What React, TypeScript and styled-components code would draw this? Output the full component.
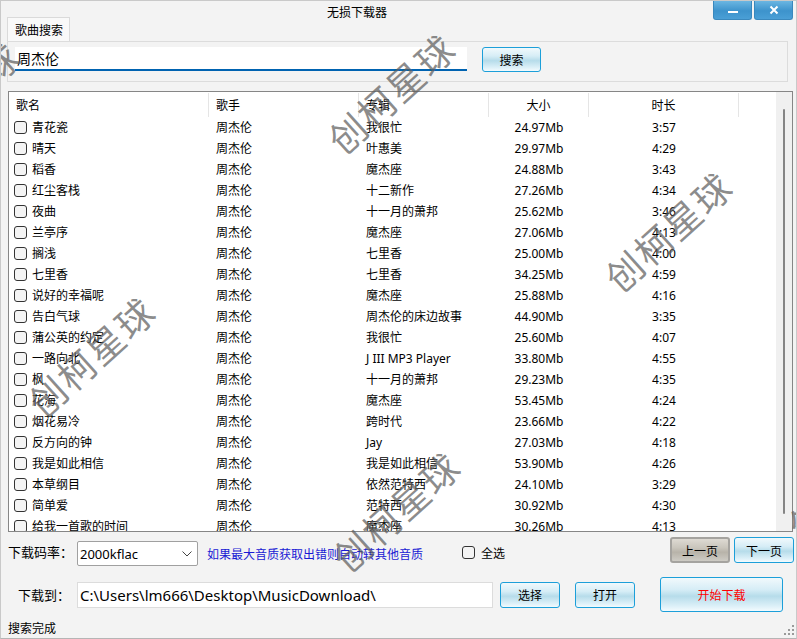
import React from 'react'
import styled, { createGlobalStyle, css } from 'styled-components'

const GlobalStyle = createGlobalStyle`
  html, body {
    margin: 0;
    padding: 0;
    background: #f3f3f3;
  }
  body {
    font-family: "Noto Sans", "Noto Sans CJK SC", sans-serif;
    font-size: 12px;
    color: #000;
  }
`

type Song = [string, string, string, string]

const songs: Song[] = [
  ['青花瓷', '我很忙', '24.97Mb', '3:57'],
  ['晴天', '叶惠美', '29.97Mb', '4:29'],
  ['稻香', '魔杰座', '24.88Mb', '3:43'],
  ['红尘客栈', '十二新作', '27.26Mb', '4:34'],
  ['夜曲', '十一月的萧邦', '25.62Mb', '3:46'],
  ['兰亭序', '魔杰座', '27.06Mb', '4:13'],
  ['搁浅', '七里香', '25.00Mb', '4:00'],
  ['七里香', '七里香', '34.25Mb', '4:59'],
  ['说好的幸福呢', '魔杰座', '25.88Mb', '4:16'],
  ['告白气球', '周杰伦的床边故事', '44.90Mb', '3:35'],
  ['蒲公英的约定', '我很忙', '25.60Mb', '4:07'],
  ['一路向北', 'J III MP3 Player', '33.80Mb', '4:55'],
  ['枫', '十一月的萧邦', '29.23Mb', '4:35'],
  ['花海', '魔杰座', '53.45Mb', '4:24'],
  ['烟花易冷', '跨时代', '23.66Mb', '4:22'],
  ['反方向的钟', 'Jay', '27.03Mb', '4:18'],
  ['我是如此相信', '我是如此相信', '53.90Mb', '4:26'],
  ['本草纲目', '依然范特西', '24.10Mb', '3:29'],
  ['简单爱', '范特西', '30.92Mb', '4:30'],
  ['给我一首歌的时间', '魔杰座', '30.26Mb', '4:13'],
]

// watermark centres, as they fall on the window
const marks = [
  { x: 390, y: 92 },
  { x: 667, y: 230 },
  { x: 90, y: 355 },
  { x: 395, y: 510 },
  { x: -45, y: 100 },
  { x: 850, y: 478 },
]

const App: React.FC = () => {
  return (
    <>
      <GlobalStyle />
      <Window>
        <TitleBar>无损下载器</TitleBar>
        <WinControls>
          <WinButton>
            <svg width="14" height="10" viewBox="0 0 14 10">
              <rect x="2" y="6" width="10" height="2" fill="#fff" />
            </svg>
          </WinButton>
          <WinButton>
            <svg width="14" height="10" viewBox="0 0 14 10">
              <path d="M3.5 1.5 L10.5 8.5 M10.5 1.5 L3.5 8.5" stroke="#fff" strokeWidth="2" />
            </svg>
          </WinButton>
        </WinControls>

        <TabStrip>
          <Tab>歌曲搜索</Tab>
        </TabStrip>
        <TabPanel>
          <SearchInput defaultValue="周杰伦" />
          <AquaButton $w={59} $h={25}>搜索</AquaButton>
        </TabPanel>

        <TableBox>
          <TableContent>
            <HeaderRow>
              <HeadCell>歌名</HeadCell>
              <HeadCell>歌手</HeadCell>
              <HeadCell>专辑</HeadCell>
              <HeadCell $center>大小</HeadCell>
              <HeadCell $center>时长</HeadCell>
              <HeadCell $last />
            </HeaderRow>
            {songs.map(([name, album, size, time]) => (
              <Row key={name}>
                <Cell>
                  <Check />
                  {name}
                </Cell>
                <Cell>周杰伦</Cell>
                <Cell>{album}</Cell>
                <Cell $center>{size}</Cell>
                <Cell $center>{time}</Cell>
                <Cell />
              </Row>
            ))}
          </TableContent>
          <ScrollTrack>
            <ScrollThumb />
          </ScrollTrack>
        </TableBox>

        <ControlRow $top={5}>
          <Label $w={69}>下载码率：</Label>
          <Select>
            <span>2000kflac</span>
            <svg width="10" height="6" viewBox="0 0 10 6">
              <path d="M0.5 0.5 L5 5 L9.5 0.5" fill="none" stroke="#444" strokeWidth="1" />
            </svg>
          </Select>
          <Hint>如果最大音质获取出错则自动转其他音质</Hint>
          <SelectAll>
            <Check />
            全选
          </SelectAll>
          <PageButtons>
            <GrayButton>上一页</GrayButton>
            <AquaButton $w={60} $h={26}>下一页</AquaButton>
          </PageButtons>
        </ControlRow>

        <ControlRow $top={11}>
          <Label $w={69} $right>下载到：</Label>
          <PathInput defaultValue="C:\Users\lm666\Desktop\MusicDownload\" />
          <AquaButton $w={60} $h={26} $ml={7}>选择</AquaButton>
          <AquaButton $w={60} $h={26} $ml={15}>打开</AquaButton>
          <AquaButton $w={123} $h={35} $ml={25} $red>开始下载</AquaButton>
        </ControlRow>

        <StatusBar>
          <span>搜索完成</span>
          <Grip>
            <svg width="10" height="10" viewBox="0 0 10 10">
              <g fill="#9a9a9a">
                <rect x="8" y="0" width="2" height="2" />
                <rect x="4" y="4" width="2" height="2" />
                <rect x="8" y="4" width="2" height="2" />
                <rect x="0" y="8" width="2" height="2" />
                <rect x="4" y="8" width="2" height="2" />
                <rect x="8" y="8" width="2" height="2" />
              </g>
            </svg>
          </Grip>
        </StatusBar>

        {marks.map((m, i) => (
          <Watermark key={i} style={{ left: m.x, top: m.y }}>
            创柯星球
          </Watermark>
        ))}
      </Window>
    </>
  )
}

const Window = styled.div`
  position: relative;
  width: 797px;
  height: 639px;
  box-sizing: border-box;
  border: 1px solid #c9c9c9;
  border-bottom-color: #b5b5b5;
  background: #f3f3f3;
  display: flex;
  flex-direction: column;
  overflow: hidden;
`

const TitleBar = styled.div`
  height: 16px;
  width: 712px;
  text-align: center;
  line-height: 22px;
  font-size: 12px;
  font-family: "Noto Sans CJK SC", sans-serif;
`

const WinControls = styled.div`
  position: absolute;
  top: 0;
  right: 3px;
  display: flex;
  gap: 2px;
`

const WinButton = styled.div`
  width: 39px;
  height: 19px;
  box-sizing: border-box;
  border: 1px solid #3a88bd;
  border-top: none;
  border-radius: 0 0 3px 3px;
  background: linear-gradient(#6bb6e2, #3d93cc 55%, #4a9fd6);
  display: flex;
  align-items: center;
  justify-content: center;
`

const TabStrip = styled.div`
  display: flex;
  padding-left: 6px;
`

const Tab = styled.div`
  width: 63px;
  height: 24px;
  box-sizing: border-box;
  border: 1px solid #dadada;
  border-bottom: none;
  background: #f9f9f9;
  padding-left: 7px;
  line-height: 23px;
  font-family: "Noto Sans CJK SC", sans-serif;
`

const TabPanel = styled.div`
  margin: 0 8px 0 6px;
  height: 41px;
  box-sizing: border-box;
  border: 1px solid #dcdcdc;
  padding: 5px 7px 0 7px;
  display: flex;
  align-items: flex-start;
  gap: 15px;
`

const SearchInput = styled.input`
  width: 452px;
  height: 24px;
  box-sizing: border-box;
  border: none;
  border-bottom: 2px solid #0063b1;
  background: #fff;
  padding: 0 2px;
  font-family: "Noto Sans", "Noto Sans CJK SC", sans-serif;
  font-size: 14px;
  color: #000;
  outline: none;
`

const AquaButton = styled.div<{ $w: number; $h: number; $ml?: number; $red?: boolean }>`
  width: ${p => p.$w}px;
  height: ${p => p.$h}px;
  margin-left: ${p => p.$ml ?? 0}px;
  flex-shrink: 0;
  box-sizing: border-box;
  border: 1px solid #1c9fd9;
  border-radius: 3px;
  background: linear-gradient(#f1f9fc 0%, #d6edf6 35%, #b6dcea 55%, #dcf0f8 85%, #f3fbfe 100%);
  display: flex;
  align-items: center;
  justify-content: center;
  font-family: "Noto Sans CJK SC", sans-serif;
  font-size: 12px;
  color: ${p => (p.$red ? '#ff0000' : '#000')};
`

const GrayButton = styled.div`
  width: 60px;
  height: 26px;
  box-sizing: border-box;
  border: 2px solid #a5a39f;
  border-radius: 3px;
  background: linear-gradient(#dedad3 0%, #c9c5bc 40%, #b8b3a9 60%, #cecbc4 100%);
  display: flex;
  align-items: center;
  justify-content: center;
  font-family: "Noto Sans CJK SC", sans-serif;
`

const TableBox = styled.div`
  margin: 9px 3px 0 7px;
  height: 441px;
  box-sizing: border-box;
  border: 1px solid #868686;
  background: #fff;
  display: flex;
  overflow: hidden;
`

const TableContent = styled.div`
  flex: 1;
  overflow: hidden;
`

const columns = css`
  display: grid;
  grid-template-columns: 200px 150px 130px 100px 150px 1fr;
`

const HeaderRow = styled.div`
  ${columns};
  height: 25px;
`

const HeadCell = styled.div<{ $center?: boolean; $last?: boolean }>`
  padding-left: ${p => (p.$center ? 0 : 7)}px;
  text-align: ${p => (p.$center ? 'center' : 'left')};
  line-height: 24px;
  border-right: ${p => (p.$last ? 'none' : '1px solid #e5e5e5')};
  margin: 1px 0 0;
  font-family: "Noto Sans CJK SC", sans-serif;
`

const Row = styled.div`
  ${columns};
  height: 21px;
  align-items: center;
`

const Cell = styled.div<{ $center?: boolean }>`
  padding-left: ${p => (p.$center ? 0 : 7)}px;
  text-align: ${p => (p.$center ? 'center' : 'left')};
  display: flex;
  align-items: center;
  justify-content: ${p => (p.$center ? 'center' : 'flex-start')};
  white-space: nowrap;
  line-height: 21px;
`

const Check = styled.span`
  width: 13px;
  height: 13px;
  box-sizing: border-box;
  border: 1px solid #333;
  border-radius: 3px;
  background: #f4f4f4;
  margin: 0 5px 0 -2px;
  flex-shrink: 0;
`

const ScrollTrack = styled.div`
  width: 16px;
  background: #f0f0f0;
  display: flex;
  justify-content: center;
  padding-top: 17px;
  box-sizing: border-box;
`

const ScrollThumb = styled.div`
  width: 2px;
  height: 405px;
  background: #858585;
  border-radius: 1px;
`

const ControlRow = styled.div<{ $top: number }>`
  display: flex;
  align-items: center;
  margin-top: ${p => p.$top}px;
`

const Label = styled.div<{ $w: number; $right?: boolean }>`
  width: ${p => p.$w}px;
  padding-left: ${p => (p.$right ? 0 : 7)}px;
  box-sizing: ${p => (p.$right ? 'content-box' : 'border-box')};
  text-align: ${p => (p.$right ? 'right' : 'left')};
  margin-right: 7px;
  font-family: "Noto Sans CJK SC", sans-serif;
  font-size: 13px;
  white-space: nowrap;
`

const Select = styled.div`
  width: 121px;
  height: 25px;
  margin-top: 4px;
  box-sizing: border-box;
  border: 1px solid #a0a0a0;
  border-radius: 2px;
  background: #fff;
  display: flex;
  align-items: center;
  justify-content: space-between;
  padding: 0 5px 0 2px;
  font-size: 13px;
`

const Hint = styled.div`
  margin: 4px 0 0 9px;
  color: #1a1ad4;
  font-family: "Noto Sans CJK SC", sans-serif;
  font-size: 12px;
  white-space: nowrap;
`

const SelectAll = styled.div`
  display: flex;
  align-items: center;
  margin: 2px 0 0 39px;
  font-family: "Noto Sans CJK SC", sans-serif;

  span {
    margin: 0 6px 0 0;
  }
`

const PageButtons = styled.div`
  display: flex;
  gap: 4px;
  margin-left: auto;
  margin-right: 2px;
  align-self: flex-start;
`

const PathInput = styled.input`
  width: 416px;
  height: 26px;
  box-sizing: border-box;
  border: 1px solid #dcdcdc;
  background: #fff;
  padding: 0 2px;
  font-family: "Noto Sans", sans-serif;
  font-size: 15px;
  color: #000;
  outline: none;
`

const StatusBar = styled.div`
  margin-top: 4px;
  height: 22px;
  padding: 0 2px 0 7px;
  display: flex;
  align-items: center;
  justify-content: space-between;
  font-family: "Noto Sans CJK SC", sans-serif;
`

const Grip = styled.div`
  display: flex;
  align-self: flex-end;
  padding-bottom: 3px;
`

const Watermark = styled.div`
  position: absolute;
  z-index: 5;
  transform: translate(-50%, -50%) rotate(-42deg);
  font-family: "Noto Sans CJK SC", sans-serif;
  font-size: 37px;
  line-height: 1;
  letter-spacing: 2px;
  color: rgba(95, 95, 95, 0.72);
  white-space: nowrap;
  pointer-events: none;
`

export default App
